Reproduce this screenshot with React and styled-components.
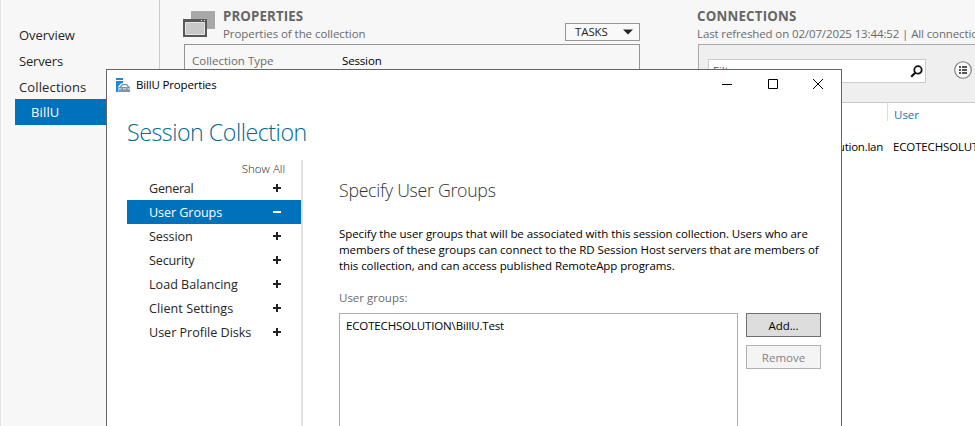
import React from 'react';
import styled, { createGlobalStyle } from 'styled-components';

const GlobalStyle = createGlobalStyle`
  * { box-sizing: border-box; }
  body {
    margin: 0;
    overflow: hidden;
    background: #f7f7f7;
    color: #1e1e1e;
    font-family: "Open Sans", "Noto Sans", sans-serif;
    font-size: 11.5px;
    line-height: 16px;
  }
`;

const Text = styled.span`
  white-space: nowrap;
  letter-spacing: ${(p) => p.$track || 0}px;
`;

const Screen = styled.div`
  position: relative;
  width: 975px;
  height: 426px;
  display: flex;
  overflow: hidden;
`;

const Sidebar = styled.nav`
  width: 160px;
  flex: none;
  padding: 22px 0 0 14px;
  border-left: 1px solid #e4e4e4;
  border-right: 1px solid #cbcbcb;
`;

const SidebarItem = styled.div`
  height: 26px;
  line-height: 26px;
  font-size: 13px;
  padding-left: ${(p) => (p.$active ? 16 : 4)}px;
  margin-top: ${(p) => (p.$active ? -1 : 0)}px;
  color: ${(p) => (p.$active ? '#fff' : '#262626')};
  background: ${(p) => (p.$active ? '#0072bc' : 'transparent')};
`;

const Properties = styled.section`
  width: 480px;
  flex: none;
  padding-left: 23px;
  display: flex;
  flex-direction: column;
`;

const Header = styled.header`
  height: 44px;
  flex: none;
  display: flex;
  color: #6b6b6b;
`;

const HeaderIcon = styled.svg`
  margin-top: 11px;
  flex: none;
`;

const HeaderText = styled.div`
  flex: 1;
  min-width: 0;
  display: flex;
  flex-direction: column;
  padding: 7px 0 0 ${(p) => p.$inset || 0}px;
`;

const HeaderTitle = styled(Text)`
  font-size: 13.3px;
  font-weight: 700;
  line-height: 18px;
  color: #666;
`;

const HeaderSub = styled(Text)`
  line-height: 18px;
`;

const TasksButton = styled.button`
  width: 75px;
  height: 18px;
  margin: 23px 0 0;
  padding: 0 6px 0 9px;
  display: flex;
  align-items: center;
  justify-content: space-between;
  font: inherit;
  line-height: 16px;
  color: #262626;
  background: #f9f9f9;
  border: 1px solid #959595;
`;

const PropertyBox = styled.div`
  margin-left: 1px;
  flex: 1;
  display: flex;
  padding: 8px 0 0 7px;
  border: 1px solid #959595;
`;

const PropertyName = styled(Text)`
  width: 150px;
  color: #6b6b6b;
`;

const PropertyValue = styled(Text)`
  color: #000;
`;

const Connections = styled.section`
  flex: 1;
  min-width: 0;
  margin-left: 57px;
  display: flex;
  flex-direction: column;
`;

const FilterBar = styled.div`
  height: 59px;
  flex: none;
  margin-left: 1px;
  display: flex;
  padding: 14px 0 0 9px;
  background: #efefef;
  border: solid #aaa;
  border-width: 1px 0 0 1px;
  border-bottom: 1px solid #c8c8c8;
`;

const FilterInput = styled.div`
  width: 218px;
  height: 24px;
  flex: none;
  display: flex;
  align-items: center;
  justify-content: space-between;
  padding: 0 2px 0 4px;
  color: #555;
  background: #fff;
  border: 1px solid #cbcbcb;
`;

const ViewButton = styled.svg`
  margin: 2px 0 0 28px;
  flex: none;
`;

const Table = styled.div`
  flex: 1;
  display: grid;
  grid-template-columns: 190px 1fr;
  grid-template-rows: 24px 40px 1fr;
  margin-left: 1px;
  background: #fff;
`;

const HeaderCell = styled.div`
  height: 18px;
  line-height: 24px;
  padding-left: ${(p) => (p.$last ? 6 : 0)}px;
  color: #1a72bb;
  border-right: ${(p) => (p.$last ? 0 : 1)}px solid #dcdcdc;
`;

const Cell = styled.div`
  line-height: 40px;
  padding: ${(p) => (p.$right ? '0 5px 0 0' : '0 0 0 5px')};
  text-align: ${(p) => (p.$right ? 'right' : 'left')};
  white-space: nowrap;
  overflow: hidden;
  color: #000;
`;

const Dialog = styled.div`
  position: absolute;
  left: 106px;
  top: 69px;
  width: 736px;
  height: 380px;
  display: flex;
  flex-direction: column;
  background: #fff;
  border: 1px solid #666;
`;

const TitleBar = styled.div`
  height: 30px;
  flex: none;
  display: flex;
  align-items: center;
  padding-left: 9px;
  gap: 6px;
  color: #000;
`;

const WindowControls = styled.div`
  margin: -2px 17px 0 auto;
  width: 103px;
  display: flex;
  justify-content: space-between;
`;

const DialogTitle = styled(Text)`
  display: block;
  height: 60px;
  flex: none;
  padding: 16px 0 0 20px;
  font-size: 23.2px;
  font-weight: 300;
  line-height: 32px;
  color: #00698f;
`;

const DialogBody = styled.div`
  flex: 1;
  display: flex;
`;

const Navigation = styled.div`
  width: 176px;
  flex: none;
  margin-left: 20px;
  border-right: 2px solid #e0e0e0;
`;

const ShowAll = styled.div`
  height: 16px;
  padding-right: 16px;
  line-height: 18px;
  text-align: right;
  font-weight: 300;
  color: #222;
`;

const NavItem = styled.div`
  height: 24px;
  display: flex;
  align-items: center;
  justify-content: space-between;
  padding: 0 20px 0 22px;
  font-size: 12.6px;
  line-height: 24px;
  color: ${(p) => (p.$active ? '#fff' : '#262626')};
  background: ${(p) => (p.$active ? '#0072bc' : 'transparent')};
`;

const NavLabel = styled(Text)`
  padding-top: 1px;
`;

const Page = styled.div`
  flex: 1;
  display: flex;
  flex-direction: column;
  padding: 17px 20px 0 36px;
`;

const PageTitle = styled(Text)`
  font-size: 17.7px;
  font-weight: 300;
  line-height: 26px;
  color: #333;
`;

const Description = styled.div`
  margin-top: 23px;
  display: flex;
  flex-direction: column;
  color: #000;
`;

const FieldLabel = styled(Text)`
  margin-top: 16px;
  color: #6b6b6b;
`;

const GroupPicker = styled.div`
  flex: 1;
  display: flex;
  gap: 8px;
  margin-top: 7px;
`;

const GroupList = styled.div`
  width: 399px;
  padding: 4px 6px;
  border: 1px solid #abadb3;
  color: #000;
`;

const ButtonColumn = styled.div`
  display: flex;
  flex-direction: column;
  gap: 8px;
`;

const Button = styled.button`
  width: 75px;
  height: 24px;
  padding: 1px 0 0;
  font: inherit;
  line-height: 21px;
  color: ${(p) => (p.disabled ? '#838383' : '#000')};
  background: ${(p) => (p.disabled ? '#f4f4f4' : '#ddd')};
  border: 1px solid ${(p) => (p.disabled ? '#adb2b5' : '#707070')};
`;

const sections = [
  { label: 'General', track: -0.26 },
  { label: 'User Groups', track: -0.08, active: true },
  { label: 'Session', track: -0.13 },
  { label: 'Security', track: -0.17 },
  { label: 'Load Balancing', track: 0 },
  { label: 'Client Settings', track: 0.05 },
  { label: 'User Profile Disks', track: -0.03 },
];

const description = [
  'Specify the user groups that will be associated with this session collection. Users who are',
  'members of these groups can connect to the RD Session Host servers that are members of',
  'this collection, and can access published RemoteApp programs.',
];

const WindowsIcon = () => (
  <HeaderIcon width="33" height="27" viewBox="0 0 33 27">
    <path fill="#a8a8a8" d="M8 0h24v18H8z" />
    <path fill="#595959" d="M0 8h24v18H0z" />
    <path fill="#c8c8c8" stroke="#e4e4e4" d="M2.5 11.5h19v12h-19z" />
    <path fill="#eee" d="M18 9h1v1h-1zM21 9h1v1h-1z" />
  </HeaderIcon>
);

const ServerIcon = () => (
  <svg width="14" height="14" viewBox="0 0 14 14">
    <path fill="#1c89dc" d="M0 0h7v2H0zM0 3h7v2L5 5.5 2.5 8v6H0z" />
    <path fill="#7895a9" d="M3 9h11v5H3z" />
    <path fill="#7895a9" d="M3.5 9 6 6h5l2.5 3h-1.8L10.5 7.2H6.6L5.4 9z" />
    <path stroke="#fff" fill="none" strokeWidth="0.9" d="M3 10.9h2.5m1.5 0h3m1.5 0H14" />
  </svg>
);

const SearchIcon = () => (
  <svg width="13" height="13" viewBox="0 0 13 13" fill="none" stroke="#111">
    <circle cx="8" cy="4.9" r="3.7" strokeWidth="1.8" />
    <path d="M5.3 7.8 1.2 11.8" strokeWidth="2.3" />
  </svg>
);

const ListIcon = () => (
  <ViewButton width="18" height="18" viewBox="0 0 18 18">
    <circle cx="9" cy="9" r="8.3" fill="#f8f8f8" stroke="#7a7a7a" strokeWidth="1.1" />
    <path stroke="#555" strokeWidth="1.8" d="M5 6h2m1 0h5M5 9h2m1 0h5M5 12h2m1 0h5" />
  </ViewButton>
);

const Toggle = ({ open }) => (
  <svg width="8" height="8" viewBox="0 0 8 8" fill={open ? '#fff' : '#222'}>
    <path d={open ? 'M0 3h8v2H0z' : 'M0 3h3V0h2v3h3v2H5v3H3V5H0z'} />
  </svg>
);

export default function App() {
  return (
    <Screen>
      <GlobalStyle />
      <Sidebar>
        <SidebarItem><Text $track={-0.06}>Overview</Text></SidebarItem>
        <SidebarItem><Text $track={-0.16}>Servers</Text></SidebarItem>
        <SidebarItem><Text $track={0.13}>Collections</Text></SidebarItem>
        <SidebarItem $active><Text $track={0.15}>BillU</Text></SidebarItem>
      </Sidebar>

      <Properties>
        <Header>
          <WindowsIcon />
          <HeaderText $inset={7}>
            <HeaderTitle $track={0.1}>PROPERTIES</HeaderTitle>
            <HeaderSub $track={-0.06}>Properties of the collection</HeaderSub>
          </HeaderText>
          <TasksButton>
            <Text $track={-0.1}>TASKS</Text>
            <svg width="10" height="6" viewBox="0 0 10 6"><path fill="#262626" d="M0 0.5h10L5 5.5z" /></svg>
          </TasksButton>
        </Header>
        <PropertyBox>
          <PropertyName>Collection Type</PropertyName>
          <PropertyValue $track={-0.15}>Session</PropertyValue>
        </PropertyBox>
      </Properties>

      <Connections>
        <Header>
          <HeaderText>
            <HeaderTitle $track={0.19}>CONNECTIONS</HeaderTitle>
            <HeaderSub $track={-0.12}>Last refreshed on 02/07/2025 13:44:52 | All connections</HeaderSub>
          </HeaderText>
        </Header>
        <FilterBar>
          <FilterInput>
            <Text>Filter</Text>
            <SearchIcon />
          </FilterInput>
          <ListIcon />
        </FilterBar>
        <Table>
          <HeaderCell />
          <HeaderCell $last><Text>User</Text></HeaderCell>
          <Cell $right><Text $track={-0.25}>ecotechsolution.lan</Text></Cell>
          <Cell><Text $track={-0.15}>ECOTECHSOLUTION</Text></Cell>
        </Table>
      </Connections>

      <Dialog>
        <TitleBar>
          <ServerIcon />
          <Text $track={-0.17}>BillU Properties</Text>
          <WindowControls>
            <svg width="12" height="12" viewBox="0 0 12 12"><path stroke="#000" d="M1 6.5h10" /></svg>
            <svg width="12" height="12" viewBox="0 0 12 12"><path fill="none" stroke="#000" d="M1.5 1.5h9v9h-9z" /></svg>
            <svg width="12" height="12" viewBox="0 0 12 12"><path stroke="#000" d="M1 1l10 10M11 1L1 11" /></svg>
          </WindowControls>
        </TitleBar>
        <DialogTitle $track={-0.46}>Session Collection</DialogTitle>
        <DialogBody>
          <Navigation>
            <ShowAll><Text>Show All</Text></ShowAll>
            {sections.map((s) => (
              <NavItem key={s.label} $active={s.active}>
                <NavLabel $track={s.track}>{s.label}</NavLabel>
                <Toggle open={s.active} />
              </NavItem>
            ))}
          </Navigation>
          <Page>
            <PageTitle $track={-0.27}>Specify User Groups</PageTitle>
            <Description>
              {description.map((line) => <Text key={line} $track={-0.07}>{line}</Text>)}
            </Description>
            <FieldLabel>User groups:</FieldLabel>
            <GroupPicker>
              <GroupList><Text $track={-0.15}>ECOTECHSOLUTION\BillU.Test</Text></GroupList>
              <ButtonColumn>
                <Button><Text $track={-0.1}>Add...</Text></Button>
                <Button disabled><Text>Remove</Text></Button>
              </ButtonColumn>
            </GroupPicker>
          </Page>
        </DialogBody>
      </Dialog>
    </Screen>
  );
}
